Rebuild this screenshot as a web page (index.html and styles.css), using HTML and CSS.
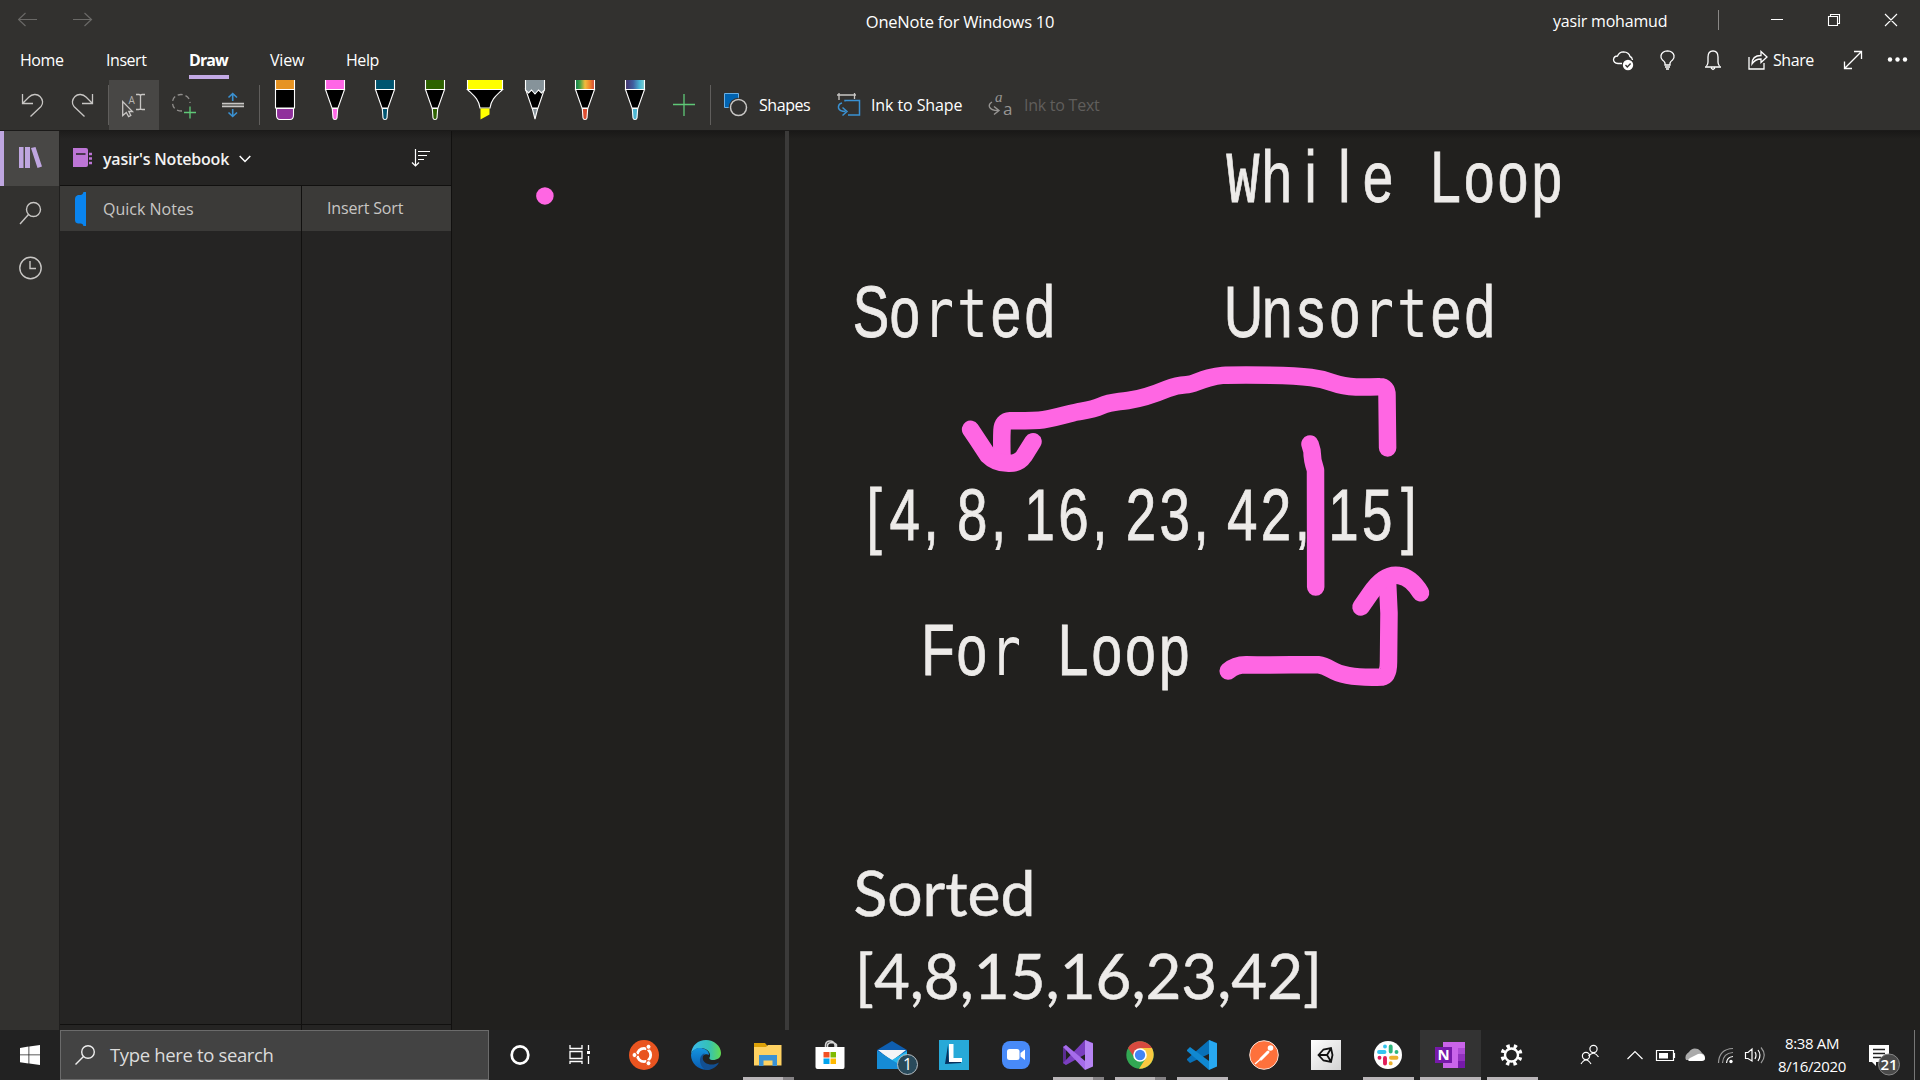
FILE: index.html
```html
<!DOCTYPE html>
<html lang="en">
<head>
<meta charset="utf-8">
<title>OneNote for Windows 10</title>
<link rel="stylesheet" href="styles.css">
</head>
<body>
<div class="app">
  <header class="header">
    <div class="titlebar">
      <div class="history">
        <svg width="76" height="20" viewBox="18 10 76 20"><path d="M37 19.500H18.500M25.500 13L18.500 19.500L25.500 26M73 19.500H91.500M84.500 13L91.500 19.500L84.500 26"/></svg>
      </div>
      <div class="app-title">OneNote for Windows 10</div>
      <div class="window-controls">
        <span class="user">yasir mohamud</span>
        <span class="divider"></span>
        <svg width="130" height="20" viewBox="1770 10 130 20"><path d="M1771 19.500H1783M1828.500 16.500H1837.500V25.500H1828.500ZM1830.500 16V14.500H1839.500V23.500H1838M1885 14L1897 26M1897 14L1885 26"/></svg>
      </div>
    </div>
    <div class="tabs-row">
      <nav class="tabs">
        <span class="tab home">Home</span><span class="tab insert">Insert</span><span class="tab draw">Draw</span><span class="tab view">View</span><span class="tab help">Help</span>
      </nav>
      <div class="actions">
        <svg class="line-icon" width="160" height="30" viewBox="1608 45 160 30">
          <path d="M1622 63.500H1618Q1613.500 63 1613.500 59.500Q1614 56 1617.500 56Q1619 52 1623.500 51.800Q1629 52 1630 56.500Q1632 57 1632.500 60"/>
          <circle class="solid" cx="1628" cy="65" r="5.200"/><path class="dark" d="M1625.500 65L1627.300 67L1630.600 63.500"/>
          <path d="M1665 65V63Q1664.500 61.500 1662.500 60Q1660.500 58 1661 55.500Q1662 51 1667.500 50.800Q1673 51 1674 55.500Q1674.500 58 1672.500 60Q1670.500 61.500 1670 63V65ZM1665 67H1670M1666 69H1669"/>
          <path d="M1705 67H1721M1706.500 66Q1708 64.500 1708 62V57Q1708 51 1713 50.800Q1718 51 1718 57V62Q1718 64.500 1719.500 66M1711 68L1713 69.500L1715 68"/>
          <path d="M1749 57V69H1764V63M1752 64Q1752 55.500 1761 55.500V51.500L1767 57L1761 62.500V59Q1755 59 1752 64Z"/>
        </svg>
        <span class="share">Share</span>
        <svg class="line-icon" width="70" height="30" viewBox="1840 45 70 30"><path d="M1845 68L1861 52M1854 51.500H1861.500V59M1844.500 61.500V68.500H1852"/><circle class="solid" cx="1890" cy="59.500" r="2.200"/><circle class="solid" cx="1897.500" cy="59.500" r="2.200"/><circle class="solid" cx="1905" cy="59.500" r="2.200"/></svg>
      </div>
    </div>
    <div class="ribbon">
      <svg class="tool" viewBox="0 0 50 50"><path d="M13.500 14V23.500H24M13.500 23.500L20 17C23 14 28 13.500 31 16.500S34.500 24 32 26.500L21.500 36.500"/></svg>
      <svg class="tool" viewBox="0 0 50 50"><path d="M33.500 14V23.500H23M33.500 23.500L27 17C24 14 19 13.500 16 16.500S12.500 24 15 26.500L25.500 36.500"/><path class="rule" d="M49.500 5V45"/></svg>
      <svg class="tool selected" viewBox="0 0 50 50"><path d="M13.700 21.500V35.500L17.300 32.500L19.600 36.600L21.800 35.500L19.800 31.500H23.500Z"/><path d="M27 14.500H30Q31.500 14.500 31.500 16Q31.500 14.500 33 14.500H36M31.500 16V28M27 29.500H30Q31.500 29.500 31.500 28Q31.500 29.500 33 29.500H36"/><text x="19.500" y="24">A</text></svg>
      <svg class="tool" viewBox="0 0 50 50"><path class="lasso" d="M23 31C16 31 13.500 27 13.500 22.500S17 14.500 22 14.500S31 18 31 23"/><path class="green" d="M25 32.500H37M31 26.500V38.500"/></svg>
      <svg class="tool" viewBox="0 0 50 50"><path d="M13 23.500H35M13 26.500H35"/><path class="grey" d="M13 25H35"/><path class="blue" d="M23.700 21V14M19.500 17.500L23.700 13.500L28 17.500M23.700 29V36M19.500 32.500L23.700 36.500L28 32.500"/></svg>
      <span class="sep"></span>
      <svg class="pen" viewBox="0 0 50 50"><path fill="#e69322" d="M15.500-1H34.500V9.500H15.500Z"/><path fill="#000" d="M15.500 9.500H34.500V28H15.500Z"/><path fill="#90309c" d="M16.500 28.500H33.500V35Q33.500 39.500 30 39.500H20Q16.500 39.500 16.500 35Z"/></svg>
      <svg class="pen" viewBox="0 0 50 50"><path fill="#ff66e6" d="M15.500-1H34.500V9.500H15.500Z"/><path fill="#000" d="M15.500 9.500H34.500L28 28H22Z"/><path fill="#ff66e6" d="M22.300 28.500H27.700L27 38Q26.700 39.500 25 39.500T23 38Z"/></svg>
      <svg class="pen" viewBox="0 0 50 50"><path fill="#005470" d="M15.500-1H34.500V9.500H15.500Z"/><path fill="#000" d="M15.500 9.500H34.500L28 28H22Z"/><path fill="#005470" d="M22.300 28.500H27.700L27 38Q26.700 39.500 25 39.500T23 38Z"/></svg>
      <svg class="pen" viewBox="0 0 50 50"><path fill="#2e6200" d="M15.500-1H34.500V9.500H15.500Z"/><path fill="#000" d="M15.500 9.500H34.500L28 28H22Z"/><path fill="#2e6200" d="M22.300 28.500H27.700L27 38Q26.700 39.500 25 39.500T23 38Z"/></svg>
      <svg class="pen" viewBox="0 0 50 50"><path fill="#ff0" d="M7.500-1H42.500V9.500H7.500Z"/><path fill="#000" d="M7.500 9.500H42.500C37 15 31 19 30 28H20C19 19 13 15 7.500 9.500Z"/><path fill="#ff0" stroke="none" d="M20.500 28.500H29.500V34.500L20.500 39.500Z"/></svg>
      <svg class="pen" viewBox="0 0 50 50"><path fill="#000" d="M15.500 9L22 28H28L34.500 9Z"/><path fill="#86939a" d="M15.500-1H34.500V10L31.500 13L28.500 10L25 14L21.500 10L18.500 13L15.500 10Z"/><path fill="#86939a" d="M22.300 28.500H27.700L25 39Z"/></svg>
      <svg class="pen" viewBox="0 0 50 50"><defs><linearGradient id="rainbow"><stop stop-color="#087b4d"/><stop offset=".25" stop-color="#4ba447"/><stop offset=".5" stop-color="#f0bc3d"/><stop offset=".75" stop-color="#ef862d"/><stop offset="1" stop-color="#cf4436"/></linearGradient></defs><path fill="url(#rainbow)" d="M15.500-1H34.500V9.500H15.500Z"/><path fill="#000" d="M15.500 9.500H34.500L28 28H22Z"/><path fill="#dc4d30" d="M22.300 28.500H27.700L27 38Q26.700 39.500 25 39.500T23 38Z"/></svg>
      <svg class="pen" viewBox="0 0 50 50"><defs><linearGradient id="galaxy"><stop stop-color="#47336d"/><stop offset=".4" stop-color="#405d9f"/><stop offset=".75" stop-color="#49b5d3"/><stop offset="1" stop-color="#80cfd0"/></linearGradient></defs><path fill="url(#galaxy)" d="M15.500-1H34.500V9.500H15.500Z"/><path fill="#000" d="M15.500 9.500H34.500L28 28H22Z"/><path fill="#4db6d2" d="M22.300 28.500H27.700L27 38Q26.700 39.500 25 39.500T23 38Z"/></svg>
      <svg class="tool" viewBox="0 0 50 50"><path class="green" d="M13 24.500H35M24 14V36"/></svg>
      <span class="sep"></span>
      <svg class="cmd-icon shapes" viewBox="723 92 26 26"><path fill="#0063b1" stroke="#69afe5" d="M724.500 93.500H738.500V107.500H724.500Z"/><circle cx="738.500" cy="107.500" r="9.800" fill="#323130" stroke="none"/><circle cx="738.500" cy="107.500" r="8" fill="#323130" stroke="#c8c6c4" stroke-width="1.500"/></svg>
      <span class="cmd c1">Shapes</span>
      <svg class="cmd-icon" viewBox="836 92 26 26"><path stroke="#c8c6c4" stroke-width="1.300" d="M837 95H856M839 93V100M854.500 93V99"/><path stroke="#3a91d2" stroke-width="1.500" d="M845 101.500V100.500H859.500V115H848M842 103Q838 104 838.500 108Q839.500 111.500 845.500 111.500M842.500 107.500L847 111.500L842.500 115.500"/></svg>
      <span class="cmd c2">Ink to Shape</span>
      <svg class="cmd-icon ink-text" viewBox="988 92 26 26"><path stroke="#979593" stroke-width="1.400" d="M992 102Q988.500 104 989.500 107Q991 110.500 998 110.500M994 106.500L999 110.500L994 114.500"/><text class="script-a" x="995" y="101.500">a</text><text x="1003" y="115">a</text></svg>
      <span class="cmd c3">Ink to Text</span>
    </div>
  </header>

  <main class="workspace">
    <aside class="rail">
      <div class="rail-item active"><svg viewBox="0 0 24 24"><path fill="#bfa6e0" d="M1 1H5.500V22H1ZM7 1H12V22H7ZM13 2L17.500 1L24 20.500L19.500 22Z"/></svg></div>
      <div class="rail-item"><svg viewBox="0 0 24 24"><circle cx="15.500" cy="8.500" r="7"/><path d="M10.500 13.500L2 23"/></svg></div>
      <div class="rail-item"><svg viewBox="0 0 24 24"><circle cx="12.500" cy="12" r="10.700"/><path d="M12 5V12.500H18"/></svg></div>
    </aside>
    <section class="panel">
      <div class="panel-head">
        <svg class="notebook" viewBox="0 0 20 20"><path fill="#bd75d6" d="M0 1H13Q15 1 15 3V18Q15 20 13 20H0Z"/><path stroke="#252423" stroke-width="1.500" d="M3 7H12.500"/><path stroke="#bd75d6" stroke-width="2.500" d="M16 7H19M16 11.500H19M16 16H19"/></svg>
        <span class="notebook-name">yasir's Notebook</span>
        <svg class="chevron" viewBox="0 0 12 8"><path d="M.7 1L6 6.500L11.300 1"/></svg>
        <svg class="sort" viewBox="0 0 20 20"><path d="M4.500 1V18M1 14.500L4.500 18L8 14.500M7 3.500H19M7 7.500H16M7 11.500H13"/></svg>
      </div>
      <div class="columns">
        <div class="sections"><div class="list-item"><svg class="section-mark" viewBox="0 0 12 34"><path fill="#0a84ee" d="M12 0V34H9.500Q9 31.500 7 31.500H4Q1 31 1 28V7Q1 4 4 3H7Q9 2.500 9.500 0Z"/></svg><span class="quick">Quick Notes</span></div></div>
        <div class="pages"><div class="list-item"><span class="page-name">Insert Sort</span></div></div>
      </div>
      <div class="panel-foot"><span></span></div>
    </section>
    <section class="canvas">
      <svg class="page" viewBox="452 131 1468 899">
        <path class="page-edge" d="M787 131V1030"/>
        <g class="mono">
          <text transform="translate(1243 202) scale(.75 1)" x="0 45 90 135 180 225 270 315 360 405"><tspan class="wide">W</tspan>hile Loop</text>
          <text transform="translate(871 337) scale(.75 1)" x="0 45 90 135 180 225">So<tspan class="broad">rt</tspan>ed</text>
          <text transform="translate(1243.500 337) scale(.75 1)" x="0 45 90 135 180 225 270 315">Unso<tspan class="broad">rt</tspan>ed</text>
          <text transform="translate(871 540) scale(.75 1)" x="4 45 80 100 135 170 190 225 270 305 325 360 405 440 460 495 540 575 595 630 675 717">[4, 8, 16, 23, 42, 15]</text>
          <text transform="translate(938 675) scale(.75 1)" x="0 45 90 135 180 225 270 315">Fo<tspan class="broad">r</tspan> Loop</text>
        </g>
        <g class="plain">
          <text x="853.500" y="915.500" textLength="182" lengthAdjust="spacingAndGlyphs">Sorted</text>
          <text x="855" y="998.500" textLength="467" lengthAdjust="spacingAndGlyphs">[4,8,15,16,23,42]</text>
        </g>
        <g class="ink">
          <path d="M544.900 195.900h.01"/>
          <path d="M1387.600 448L1387 395Q1387 386.700 1380 386.700C1372 386.500 1366 387.500 1356 387S1342 386 1333.600 383S1323 379 1311 377.500S1270 375 1246 375S1220 375 1208.600 378S1193 384.500 1186 384.700S1173 386.500 1167 389S1143 398.500 1128 400.500S1110 402 1101 406S1085 410.500 1077 412S1050 419.500 1039 420.300S1022 420.500 1010 420.700Q1002.500 421 1002 430Q1001.500 440 1002 457"/>
          <path d="M970.600 429.300L976.400 438L987.600 455Q996 463.500 1009 463.300Q1019 463.500 1024 456L1033 441.700"/>
          <path d="M1310 444L1312 451Q1312 460 1315.500 470L1315.700 587"/>
          <path d="M1228.200 671Q1235 664.700 1246 664.700C1275 665.500 1295 664.500 1318 664.700Q1324 665.500 1331 669.500C1342 676 1360 678 1382 677Q1388.500 676 1388.500 662L1389 613L1387.600 583"/>
          <path d="M1361 607L1370 594Q1384 573 1399 575.500Q1411 577 1420.600 592.700"/>
        </g>
      </svg>
    </section>
  </main>

  <footer class="taskbar">
    <div class="start"><svg viewBox="0 0 20 20"><path fill="#fff" d="M0 3L8.500 1.500V9.500H0ZM9.300 1.400L20 0V9.500H9.300ZM0 10.300H8.500V18.500L0 17.300ZM9.300 10.300H20V20L9.300 18.600Z"/></svg></div>
    <div class="search"><svg viewBox="0 0 20 20"><circle cx="13" cy="7" r="6.300"/><path d="M8.500 11.500L.5 19.500"/></svg><span>Type here to search</span></div>
    <div class="apps">
      <div class="app-cell"><svg viewBox="0 0 30 30"><ellipse cx="15" cy="15" rx="8.300" ry="8.700" fill="none" stroke="#fff" stroke-width="2.700"/></svg></div>
      <div class="app-cell"><svg viewBox="0 0 30 30"><path fill="none" stroke="#fff" stroke-width="1.300" d="M3 5V8.500H15V5M3 11.500H15V18.500H3ZM3 24V21.500H15V24M21.500 5V10M21.500 16V24"/><path fill="#fff" d="M20 11H23V14H20Z"/></svg></div>
      <div class="app-cell"><svg viewBox="0 0 30 30"><circle cx="15" cy="15" r="15" fill="#e95420"/><circle cx="15" cy="15" r="6.700" fill="none" stroke="#fff" stroke-width="2.800"/><path stroke="#e95420" stroke-width="1.400" d="M15 15L5 15M15 15L20 6M15 15L20 24"/><g fill="#fff" stroke="#e95420"><circle cx="5.500" cy="15" r="2.500"/><circle cx="19.500" cy="6.800" r="2.500"/><circle cx="19.500" cy="23.200" r="2.500"/></g></svg></div>
      <div class="app-cell"><svg viewBox="0 0 30 30"><defs><linearGradient id="edgeTop"><stop stop-color="#3ab9ee"/><stop offset=".6" stop-color="#35c1b5"/><stop offset="1" stop-color="#63dc50"/></linearGradient><linearGradient id="edgeSide" x2="0" y2="1"><stop stop-color="#1394e0"/><stop offset="1" stop-color="#0a5bb0"/></linearGradient></defs><path fill="url(#edgeTop)" d="M0 14C1 5 7 0 15 0S30 6 30 13C30 18 26 20 22 20C19 20 17.500 18.500 19 16.500C20 12 15 8 10 8C5 8 1 11 0 14Z"/><path fill="url(#edgeSide)" d="M0 15C1 9 7 7 12 8.500C16 9.500 18 12 18 15C16 13.500 11 14 11 19C11 24 16 27 20 29C10 32 0 25 0 15Z"/><path fill="#124f91" d="M14 13.500C11 16 11 20 14 22.500C18 25.500 24 25 28 22.500C25 28 20 30 16 30C11 29 8.500 23 9 19C9.500 15.500 12 13.500 14 13.500Z"/></svg></div>
      <div class="app-cell open stacked"><svg viewBox="0 0 30 30"><path fill="#dda108" d="M1 3H12L14.500 6V10H1Z"/><path fill="#ffd262" d="M1 7H13L15 5H28.500V25.500H1Z"/><path fill="#3b92d4" d="M6 15H24V26H19.500V20.500H10.500V26H6Z"/></svg></div>
      <div class="app-cell"><svg viewBox="0 0 30 30"><path fill="none" stroke="#d7d7d7" stroke-width="1.500" d="M10.500 8V5Q11 1 15 1T20 5V8M12.500 8V5Q13 3 16 2.500Q20 2.500 21.500 5V8"/><path fill="#fff" d="M.5 7H29.500V27Q29.500 29 28 29H2.500Q.5 29 .5 27Z"/><path fill="#f25022" d="M8.500 12H14.500V17.500H8.500Z"/><path fill="#7fba00" d="M15.500 12H21V17.500H15.500Z"/><path fill="#00a4ef" d="M8.500 18.500H14.500V24H8.500Z"/><path fill="#ffb900" d="M15.500 18.500H21V24H15.500Z"/></svg></div>
      <div class="app-cell"><svg class="mail" viewBox="0 0 42 36"><path fill="#0e5eb0" d="M0 10L15 1L30 10V15H0Z"/><path fill="#f4f5f7" d="M1 10H29L15 21Z"/><path fill="#27b9f0" d="M0 11L15 20L30 11V29H0Z"/><path fill="#168bd5" d="M0 11L30 29H0Z"/><circle cx="30.500" cy="24.500" r="10" fill="#294a5b" stroke="#b7c0c5"/><text x="30.500" y="30">1</text></svg></div>
      <div class="app-cell"><svg viewBox="0 0 30 30"><path fill="#27a9d8" d="M0 0H30V30H0Z"/><path fill="#08315d" d="M9 5L6 24L22 23V22H10Z"/><path fill="#fff" d="M10 4H14.500V18H23V22H10Z"/></svg></div>
      <div class="app-cell"><svg viewBox="0 0 30 30"><rect x="1" y="1" width="28" height="28" rx="8" fill="#488af8"/><rect x="6" y="9" width="12.500" height="11" rx="2.500" fill="#fff"/><path fill="#fff" d="M19.500 13L24 9.500V20L19.500 16.500Z"/></svg></div>
      <div class="app-cell open stacked"><svg viewBox="0 0 30 30"><path fill="#5b2d90" d="M0 7L3 5V25L0 23Z"/><path fill="#7b3fc0" d="M22 0L30 3V10L3 25L0 23Z"/><path fill="#a66ceb" d="M3 5L0 7L22 30V21Z"/><path fill="#b784f4" d="M22 0L30 3.500V26.500L22 30Z"/></svg></div>
      <div class="app-cell open stacked"><svg viewBox="0 0 30 30"><circle cx="15" cy="15" r="13.700" fill="#32a853"/><path fill="#d84a3f" d="M3 8C8-1 22-1 27 8H15L9 17Z"/><path fill="#fbc940" d="M15 8H27C32 18 25 29 14 28.700L21 18Z"/><circle cx="15" cy="15" r="6.800" fill="#fff"/><circle cx="15" cy="15" r="5.200" fill="#4285f4"/></svg></div>
      <div class="app-cell open"><svg viewBox="0 0 30 30"><path fill="#0871b9" d="M22 0L30 3V10L3 23L0 20V19Z"/><path fill="#1088d1" d="M3 7L0 10V11L22 30V21Z"/><path fill="#28a8f1" d="M22 0L30 3.500V26.500L22 30Z"/></svg></div>
      <div class="app-cell"><svg viewBox="0 0 30 30"><circle cx="15" cy="15" r="14.300" fill="#fe713c" stroke="#f9ded3"/><path stroke="#fff" stroke-width="3" stroke-linecap="round" d="M12 19L19 12"/><path stroke="#fff" stroke-width="1.500" d="M6 24L15 16"/><circle cx="21.500" cy="8" r="2.800" fill="#fff"/></svg></div>
      <div class="app-cell"><svg viewBox="0 0 30 30"><defs><linearGradient id="silver" x2="1" y2="1"><stop stop-color="#fff"/><stop offset="1" stop-color="#d2d2d2"/></linearGradient></defs><path fill="url(#silver)" d="M0 0H30V30H0Z"/><path fill="none" stroke="#111" stroke-width="1.800" d="M7.500 15L12.500 9.500L20 8L21.500 15L20 22L12.500 20.500ZM8 15H16M16 15L20 8.500M16 15L20 21.500"/></svg></div>
      <div class="app-cell open"><svg viewBox="0 0 30 30"><circle cx="15" cy="15" r="14" fill="#fff"/><g stroke-width="3.900" stroke-linecap="round"><path stroke="#36c5f0" d="M6 12H11.500M12 6.500V6.600"/><path stroke="#2eb67d" d="M17.700 6.500V11.500M23.500 12V12.100"/><path stroke="#ecb22e" d="M18 17.700H23.500M17.700 23.300V23.400"/><path stroke="#e01e5a" d="M12 18V23.500M6.500 17.700V17.800"/></g></svg></div>
      <div class="app-cell open current"><svg viewBox="0 0 30 30"><path fill="#ca64ea" d="M8 2H23V28H8Z"/><path fill="#ae4bd5" d="M23 8H30V15H23Z"/><path fill="#9332bf" d="M23 14H30V21H23Z"/><path fill="#7719aa" d="M23 21H30V28H23Z"/><path fill="#ca64ea" d="M23 2H30V8H23Z"/><path fill="#7719aa" d="M0 7H17V23H0Z"/><text class="app-n" x="8.500" y="19.500">N</text></svg></div>
      <div class="app-cell open"><svg viewBox="0 0 30 30"><circle cx="14.500" cy="15" r="6.500" fill="none" stroke="#fff" stroke-width="2.400"/><circle cx="14.500" cy="15" r="9" fill="none" stroke="#fff" stroke-width="4" stroke-dasharray="3.300 3.769" stroke-dashoffset="1.650" transform="rotate(22.500 14.500 15)"/></svg></div>
    </div>
    <div class="tray">
      <svg class="tray-icons" viewBox="1576 1035 192 40">
        <circle cx="1593.500" cy="1049" r="3.600"/><path d="M1588.500 1056Q1594 1050 1598.500 1057"/><circle cx="1586" cy="1056" r="3.600"/><path d="M1581 1064Q1586 1056 1591 1064"/>
        <path d="M1627.500 1059L1635 1051.500L1642.500 1059"/>
        <path d="M1656.500 1050.500H1673.500V1060.500H1656.500ZM1674.500 1053V1058"/><path class="solid" d="M1659 1053H1668V1058.500H1659Z"/>
        <path class="cloud-back" d="M1686 1060Q1684 1055 1689 1052Q1692 1047 1698 1049Q1701 1051 1702 1053Q1706 1055 1704.500 1060Z"/><path class="solid" d="M1689 1061Q1687 1060 1690 1058L1698 1054Q1704 1053 1705 1058Q1705 1061 1702 1061Z"/>
        <path class="dim" d="M1718.500 1063Q1719 1049 1733 1048.500M1722.500 1063Q1723 1053 1733 1052.500"/><path d="M1726.500 1063Q1727 1057 1733 1056.500"/><circle class="solid" cx="1731" cy="1061.500" r="1.700"/>
        <path d="M1745.500 1052.500H1748L1752 1049V1061L1748 1058.500H1745.500ZM1755 1052Q1757 1055 1755 1059"/><path d="M1758 1050Q1762 1055 1758 1061"/><path class="dim" d="M1761 1047.500Q1767.500 1055 1761 1063"/>
      </svg>
      <div class="clock"><span>8:38 AM</span><span>8/16/2020</span></div>
      <svg class="notice" viewBox="1866 1040 38 38"><path fill="#fff" d="M1869 1045H1889V1062H1876V1066L1872 1062H1869Z"/><path stroke="#222" stroke-width="1.400" d="M1873 1049.500H1885M1873 1053.500H1885M1873 1057.500H1881"/><circle cx="1889" cy="1064.500" r="10.500" fill="#4a4a4a" stroke="#868686"/><text x="1889" y="1070">21</text></svg>
      <span class="peek"></span>
    </div>
  </footer>
</div>
</body>
</html>
```
FILE: styles.css
```css
* { box-sizing: border-box; }
body { margin: 0; background: #201f1e; color: #fff; font-family: "Open Sans", "Noto Sans", sans-serif; overflow: hidden; }
svg { display: block; fill: none; flex: none; }
.app { width: 1920px; height: 1080px; display: flex; flex-direction: column; }

.header { height: 131px; background: #32312f; border-bottom: 1px solid #1b1a19; flex: none; font-size: 16px; letter-spacing: -.45px; }
.titlebar { height: 40px; display: grid; grid-template-columns: 600px 720px 600px; }
.history { padding: 10px 0 0 18px; }
.history svg { stroke: #6a6967; stroke-width: 1.200; }
.app-title { text-align: center; font-size: 16.500px; line-height: 43px; letter-spacing: -.25px; }
.window-controls { display: flex; }
.window-controls svg { margin: 10px 0 0 51px; stroke: #fff; stroke-width: 1.100; }
.user { width: 165px; margin-left: 233px; line-height: 43px; letter-spacing: -.2px; }
.divider { width: 1px; height: 20px; margin-top: 10px; background: #8a8886; }
.tabs-row { height: 40px; display: flex; justify-content: space-between; }
.tabs { display: flex; padding-left: 20px; line-height: 41px; }
.tab { height: 39px; }
.home { width: 86px; }
.insert { width: 83px; }
.draw { width: 40px; margin: 0 41px 0 0; font-weight: 700; letter-spacing: -.9px; border-bottom: 4px solid #c3aae6; }
.view { width: 76px; letter-spacing: -.2px; }
.actions { display: flex; width: 312px; padding-top: 5px; }
.line-icon { stroke: #fff; stroke-width: 1.300; }
.line-icon .solid { fill: #fff; stroke: none; }
.line-icon .dark { stroke: #32312f; }
.share { width: 67px; margin-left: 5px; line-height: 31px; }
.ribbon { height: 50px; display: flex; align-items: center; padding-left: 9px; }
.tool, .pen { width: 50px; height: 50px; }
.tool { stroke: #c8c6c4; stroke-width: 1.300; }
.tool.selected { background: #484745; }
.tool text { font-size: 10px; fill: #b5b3b1; stroke: none; }
.tool .rule { stroke: #605e5c; stroke-width: 1; }
.tool .green { stroke: #5fc877; }
.tool .blue { stroke: #3a91d2; stroke-width: 1.600; }
.tool .grey { stroke: #8a8886; }
.tool .lasso { stroke: #8f8d8b; stroke-dasharray: 5 3; }
.pen { stroke: #fff; stroke-width: 1.100; }
.sep { width: 1px; height: 40px; background: #605e5c; }
.cmd-icon { width: 26px; height: 26px; }
.shapes { margin-left: 12px; }
.cmd { line-height: 50px; white-space: nowrap; }
.c1 { width: 77px; margin-left: 10px; }
.c2 { width: 117px; margin-left: 9px; letter-spacing: -.1px; }
.c3 { margin-left: 10px; color: #605e5c; letter-spacing: -.25px; }
.ink-text { overflow: visible; }
.ink-text text { font: 17px "Open Sans", sans-serif; fill: #979593; }
.ink-text .script-a { font: italic 15px "Liberation Serif", serif; }

.workspace { height: 899px; display: flex; flex: none; background: #201f1e; }
.rail { width: 59px; background: #32312f; margin-right: 1px; }
.rail-item { height: 55px; display: flex; align-items: center; padding-left: 18px; }
.rail-item.active { background: #484745; border-left: 4px solid #bfa6e0; padding-left: 14px; }
.rail-item svg { width: 24px; height: 24px; margin-top: -1px; stroke: #c8c6c4; stroke-width: 1.400; }
.rail-item.active svg { stroke: none; }
.panel { width: 392px; background: #252423; border-right: 1px solid #11100f; display: flex; flex-direction: column; }
.panel-head { height: 55px; border-bottom: 1px solid #11100f; display: flex; align-items: center; padding-left: 13px; background: linear-gradient(#1d1c1b, #252423 8px); }
.notebook { width: 20px; height: 20px; margin-bottom: 2px; }
.notebook-name { width: 127px; margin: 2px 0 0 10px; font-size: 16px; font-weight: 600; letter-spacing: -.2px; white-space: nowrap; color: #f3f2f1; }
.chevron { width: 12px; height: 8px; margin: 1px 0 0 9px; stroke: #fff; stroke-width: 1.500; }
.sort { width: 20px; height: 20px; margin-left: 160px; stroke: #fff; stroke-width: 1.200; }
.columns { flex: 1; display: grid; grid-template-columns: 242px 1fr; border-bottom: 1px solid #11100f; }
.sections { border-right: 1px solid #11100f; }
.list-item { height: 45px; display: flex; align-items: center; background: #3b3a38; color: #c8c6c4; font-size: 16px; letter-spacing: -.15px; }
.section-mark { width: 12px; height: 34px; margin-left: 14px; }
.quick { margin-left: 17px; letter-spacing: 0; }
.page-name { margin: -1px 0 0 25px; }
.panel-foot { height: 5px; display: flex; }
.panel-foot span { width: 242px; border-right: 1px solid #11100f; }
.canvas { width: 1468px; background: linear-gradient(#191817, #21201e 8px); }
.page { width: 1468px; height: 899px; }
.page-edge { stroke: #3b3a39; stroke-width: 4; }
.mono text { font: 73px "Liberation Sans", Arial, sans-serif; text-anchor: middle; fill: #edebe9; stroke: #edebe9; stroke-width: .8; }
.mono .wide { font-family: "Liberation Mono", monospace; }
.mono .broad { font-family: "DejaVu Sans Mono", monospace; font-size: 68px; stroke: none; }
.plain text { font: 61px Lato, sans-serif; fill: #edebe9; stroke: #edebe9; stroke-width: .5; }
.ink { stroke: #ff66e3; stroke-width: 17.500; stroke-linecap: round; stroke-linejoin: round; }

.taskbar { height: 50px; display: flex; background: #222; flex: none; }
.start { width: 60px; padding: 15px 20px; }
.start svg { width: 20px; height: 20px; }
.search { width: 429px; display: flex; align-items: center; background: #434343; border: 1px solid #6b6b6b; padding-left: 14px; color: #dcdcdc; font-size: 18.500px; letter-spacing: -.35px; }
.search svg { width: 20px; height: 20px; margin-right: 15px; stroke: #eee; stroke-width: 1.400; }
.search span { margin-top: -2px; }
.apps { display: flex; }
.app-cell { width: 62px; height: 50px; display: flex; flex-direction: column; justify-content: space-between; align-items: center; padding-top: 10px; }
.app-cell svg { width: 30px; height: 30px; }
.app-cell .mail { width: 42px; height: 36px; margin-left: 12px; }
.mail text { font: 16px "Open Sans", sans-serif; text-anchor: middle; fill: #fff; }
.app-cell.open::after { content: ""; width: 51px; height: 3px; margin-right: -1px; background: #b9b5b8; }
.app-cell.stacked::after { background: linear-gradient(90deg, #b9b5b8 40px, #858285 40px); }
.app-cell.current { background: linear-gradient(90deg, transparent 1px, #333 1px); }
.app-cell.current::after { width: 61px; }
.app-n { font: bold 15px "Open Sans", sans-serif; text-anchor: middle; fill: #fff; stroke: none; }
.tray { display: flex; align-items: center; margin-left: 33px; }
.tray-icons { width: 192px; height: 40px; stroke: #fff; stroke-width: 1.200; }
.tray-icons .solid { fill: #fff; stroke: none; }
.tray-icons .cloud-back { fill: #aaa; stroke: none; }
.tray-icons .dim { stroke: #999; }
.clock { width: 88px; display: flex; flex-direction: column; align-items: center; font-size: 15px; line-height: 23px; letter-spacing: -.35px; }
.notice { width: 38px; height: 38px; margin: 8px 0 0 10px; }
.notice text { font: 600 15px "Open Sans", sans-serif; text-anchor: middle; fill: #fff; }
.peek { width: 1px; height: 50px; margin-left: 10px; background: #777; }
```
